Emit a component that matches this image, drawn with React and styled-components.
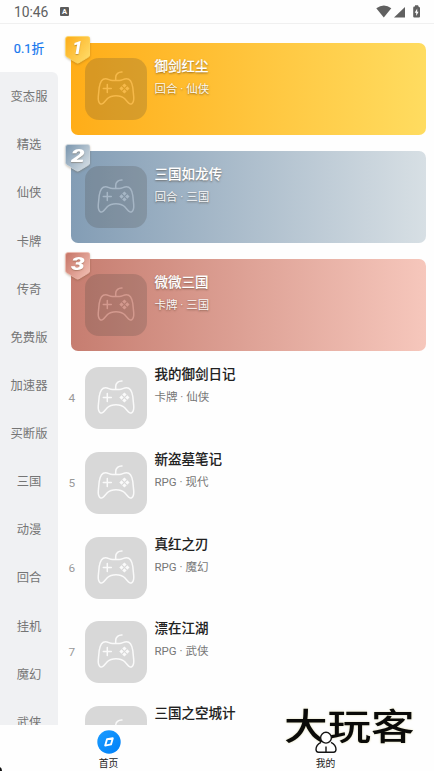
import React from "react";
import styled, { createGlobalStyle } from "styled-components";

const Global = createGlobalStyle`
  * { box-sizing: border-box; }
  html, body { margin: 0; padding: 0; background: #fff; overflow: hidden; }
  body { font-family: Roboto, "Noto Sans CJK SC", sans-serif; }
  svg { display: block; }
`;

const Screen = styled.div`
  position: relative;
  width: 434px;
  height: 771px;
  display: flex;
  flex-direction: column;
  background: #fefefe;
  overflow: hidden;
`;

const StatusBar = styled.header`
  flex: none;
  height: 24px;
  padding: 0 13px 0 14px;
  display: flex;
  align-items: center;
  border-bottom: 1px solid #f0f0f0;
  color: #606060;
`;

const Clock = styled.span`
  width: 46px;
  font-size: 13.9px;
  line-height: 24px;
  letter-spacing: -0.1px;
  padding-top: 1px;
`;

const KeyboardMark = styled.span`
  width: 9px;
  height: 9px;
  border-radius: 1px;
  background: #5c5c5c;
  color: #fff;
  font-size: 7.5px;
  line-height: 9.5px;
  font-weight: 700;
  text-align: center;
`;

const StatusIcons = styled.svg`
  margin-left: auto;
`;

const Main = styled.main`
  flex: 1;
  min-height: 0;
  display: flex;
  overflow: hidden;
`;

const Sidebar = styled.nav`
  flex: none;
  width: 58px;
  background: #fefefe;
`;

const SideGroup = styled.div`
  background: #f0f1f3;
  border-top-right-radius: 6px;
`;

const SideItem = styled.div`
  height: 48.14px;
  display: flex;
  align-items: center;
  justify-content: center;
  font-size: ${(p) => (p.$active ? "12.7px" : "12.3px")};
  font-weight: 400;
  padding-bottom: ${(p) => (p.$active ? "2px" : "0")};
  -webkit-text-stroke: ${(p) => (p.$active ? "0.2px #1677ee" : "0")};
  color: ${(p) => (p.$active ? "#1677ee" : "#757575")};
  white-space: nowrap;
`;

const List = styled.section`
  flex: 1;
  min-width: 0;
  padding: 19px 8px 0 13px;
`;

const Card = styled.article`
  position: relative;
  height: 92px;
  margin-bottom: 16px;
  padding: 15px 14px;
  display: flex;
  border-radius: 7px;
  background: linear-gradient(90deg, ${(p) => p.$from}, ${(p) => p.$to});
`;

const Row = styled.article`
  height: 84.75px;
  display: flex;
`;

const Rank = styled.span`
  width: 14px;
  height: 62px;
  line-height: 63px;
  font-size: 11.8px;
  color: #999;
  text-indent: -2.6px;
`;

const Badge = styled.div`
  position: absolute;
  left: -6.5px;
  top: -6.7px;
  width: 25.5px;
  height: 28px;
  filter: drop-shadow(0 1px 1px rgba(90, 60, 20, 0.3));
`;

const BadgeShape = styled.svg`
  width: 100%;
  height: 100%;
`;

const BadgeDigit = styled.span`
  position: absolute;
  inset: 0 0 4px;
  display: flex;
  align-items: center;
  justify-content: center;
  color: #fff;
  font: italic 900 18px/1 Roboto, sans-serif;
  transform: scaleX(${(p) => p.$stretch});
  text-shadow: 0 1px 1px rgba(90, 60, 30, 0.35);
`;

const Thumb = styled.div`
  flex: none;
  width: 62px;
  height: 62px;
  border-radius: 14px;
  background: ${(p) => (p.$tinted ? "rgba(70,65,60,0.21)" : "#d8d8d8")};
  color: ${(p) => (p.$tinted ? p.$line : "#fafafa")};
`;

const Info = styled.div`
  padding-left: 7.5px;
  padding-top: ${(p) => (p.$tinted ? "0.5px" : "0")};
  color: ${(p) => (p.$tinted ? "#fff" : "#212121")};
  text-shadow: ${(p) => (p.$tinted ? "0 1px 2px rgba(60,40,20,0.55)" : "none")};
`;

const Title = styled.h2`
  margin: 0;
  height: 20px;
  line-height: 15px;
  font-size: 13.5px;
  font-weight: 500;
  -webkit-text-stroke: 0.1px currentColor;
  white-space: nowrap;
`;

const Sub = styled.p`
  margin: 0;
  line-height: 20px;
  font-size: 11.5px;
  color: ${(p) => (p.$tinted ? "rgba(255,255,255,0.95)" : "#777")};
  white-space: nowrap;
`;

const TabBar = styled.footer`
  position: relative;
  flex: none;
  height: 46px;
  display: flex;
  background: #fefefe;
`;

const Tab = styled.div`
  position: relative;
  z-index: 2;
  flex: 1;
  display: flex;
  flex-direction: column;
  align-items: center;
  padding-top: 5px;
`;

const TabIcon = styled.svg`
  width: 24px;
  height: 24px;
`;

const TabLabel = styled.span`
  margin-top: 3px;
  font-size: 9.8px;
  line-height: 14px;
  color: #222;
`;

const Watermark = styled.div`
  position: absolute;
  z-index: 1;
  left: 284px;
  top: -25px;
  height: 48px;
  font: 500 36px/48px "Noto Sans CJK SC", sans-serif;
  color: #0a0a08;
  white-space: nowrap;
  transform: scaleX(1.21);
  transform-origin: left center;
  text-shadow: 0 0 2px #d8d5a8;
`;

const CornerMark = styled.svg`
  position: absolute;
  left: 0;
  bottom: 0;
`;

function Gamepad() {
  return (
    <svg width="62" height="62" viewBox="0 0 62 62" fill="none" stroke="currentColor" strokeWidth="1.5" strokeLinecap="round" strokeLinejoin="round">
      <path d="M30.7 22V19.5C30.7 16 33.5 13.8 37 14" />
      <path d="M20.5 20.8C23.5 20.8 24.3 22.5 27.5 22.5H34.5C37.5 22.5 38.3 20.8 41.5 20.8C45.8 20.8 47 24.5 47.8 29.5L48.7 38.5C49.3 46 45.5 48 42.6 44L39.5 40.5C35.5 36.8 26.5 36.8 22.5 40.5L19.4 44C16.5 48 12.7 46 13.3 38.5L14.2 29.5C15 24.5 16.2 20.8 20.5 20.8Z" />
      <path d="M22.3 26.5V34.5M18.3 30.5H26.3" />
      <path fill="currentColor" stroke="none" d="M39.4 25.4l2.2 2.2-2.2 2.2-2.2-2.2zM39.4 31.2l2.2 2.2-2.2 2.2-2.2-2.2zM36.5 28.3l2.2 2.2-2.2 2.2-2.2-2.2zM42.3 28.3l2.2 2.2-2.2 2.2-2.2-2.2z" />
    </svg>
  );
}

function RankBadge({ rank, from, to }) {
  const id = `badge-${rank}`;
  return (
    <Badge>
      <BadgeShape viewBox="0 0 25.5 28">
        <defs>
          <linearGradient id={id} x1="0" y1="0" x2="1" y2="0.8">
            <stop offset="0.1" stopColor={from} />
            <stop offset="1" stopColor={to} />
          </linearGradient>
        </defs>
        <path d="M3 .5H22.5Q25 .5 25 3V18.5Q25 20.3 23.5 21.1L14 26.8Q12.7 27.5 11.5 26.8L2 21.1Q.5 20.3 .5 18.5V3Q.5 .5 3 .5Z" fill={`url(#${id})`} stroke={to} strokeWidth=".7" />
      </BadgeShape>
      <BadgeDigit $stretch={rank === 1 ? 1 : 1.35}>{rank}</BadgeDigit>
    </Badge>
  );
}

const categories = ["变态服", "精选", "仙侠", "卡牌", "传奇", "免费版", "加速器", "买断版", "三国", "动漫", "回合", "挂机", "魔幻", "武侠"];

const podium = [
  { title: "御剑红尘", sub: "回合 · 仙侠", from: "#ffad18", to: "#ffdc60", line: "#f6b94a", badge: ["#fdb01f", "#ffdb68"] },
  { title: "三国如龙传", sub: "回合 · 三国", from: "#839db5", to: "#d7dfe4", line: "#a6b6c5", badge: ["#819bb2", "#d5dee4"] },
  { title: "微微三国", sub: "卡牌 · 三国", from: "#c67d70", to: "#f6c7bc", line: "#d3998e", badge: ["#c97a6c", "#f1bdb1"] },
];

const games = [
  { title: "我的御剑日记", sub: "卡牌 · 仙侠" },
  { title: "新盗墓笔记", sub: "RPG · 现代" },
  { title: "真红之刃", sub: "RPG · 魔幻" },
  { title: "漂在江湖", sub: "RPG · 武侠" },
  { title: "三国之空城计", sub: "" },
];

export default function App() {
  return (
    <Screen>
      <Global />
      <StatusBar>
        <Clock>10:46</Clock>
        <KeyboardMark>A</KeyboardMark>
        <StatusIcons width="45" height="14" viewBox="0 0 45 14" fill="#606060">
          <path d="M.3 3.3Q8-2.2 15.3 3.3L7.8 12.5Z" />
          <path d="M29 2V12.5H18Z" />
          <path d="M38.2 1.6H39V.2H42.2V1.6H43V2Q44 2 44 3V11.5Q44 12.5 43 12.5H38.2Q37.2 12.5 37.2 11.5V3Q37.2 1.6 38.2 1.6Z" />
          <path d="M41.2 3.5L38.7 7.7H40.2V11L42.6 6.8H41.2Z" fill="#fff" />
        </StatusIcons>
      </StatusBar>
      <Main>
        <Sidebar>
          <SideItem $active>0.1折</SideItem>
          <SideGroup>
            {categories.map((c) => <SideItem key={c}>{c}</SideItem>)}
          </SideGroup>
        </Sidebar>
        <List>
          {podium.map((g, i) => (
            <Card key={g.title} $from={g.from} $to={g.to}>
              <RankBadge rank={i + 1} from={g.badge[0]} to={g.badge[1]} />
              <Thumb $tinted $line={g.line}><Gamepad /></Thumb>
              <Info $tinted>
                <Title>{g.title}</Title>
                <Sub $tinted>{g.sub}</Sub>
              </Info>
            </Card>
          ))}
          {games.map((g, i) => (
            <Row key={g.title}>
              <Rank>{i < 4 ? i + 4 : ""}</Rank>
              <Thumb><Gamepad /></Thumb>
              <Info>
                <Title>{g.title}</Title>
                <Sub>{g.sub}</Sub>
              </Info>
            </Row>
          ))}
        </List>
      </Main>
      <TabBar>
        <Watermark>大玩客</Watermark>
        <Tab>
          <TabIcon viewBox="0 0 24 24">
            <defs>
              <linearGradient id="home" x1="0" y1="0" x2="1" y2="1">
                <stop stopColor="#1b9cff" />
                <stop offset="1" stopColor="#0080f8" />
              </linearGradient>
            </defs>
            <circle cx="12" cy="12" r="11.7" fill="url(#home)" />
            <path d="M10 9.3L15.8 8.3L14 14.4L8.2 15.6Z" fill="none" stroke="#fff" strokeWidth="1.9" strokeLinejoin="round" />
          </TabIcon>
          <TabLabel>首页</TabLabel>
        </Tab>
        <Tab>
          <TabIcon viewBox="0 0 24 24" fill="#fff" stroke="#151515" strokeWidth="1.4">
            <path d="M7 12.3Q2 15 2 19.3Q2 22.2 4.5 22.2H19.5Q22 22.2 22 19.3Q22 15 17 12.3M12 16.5V22" strokeLinejoin="round" />
            <circle cx="12" cy="7.7" r="5.4" />
          </TabIcon>
          <TabLabel>我的</TabLabel>
        </Tab>
      </TabBar>
      <CornerMark width="3" height="4" viewBox="0 0 3 4"><path d="M0 0Q2 1 2 4H0Z" fill="#111" /></CornerMark>
    </Screen>
  );
}
